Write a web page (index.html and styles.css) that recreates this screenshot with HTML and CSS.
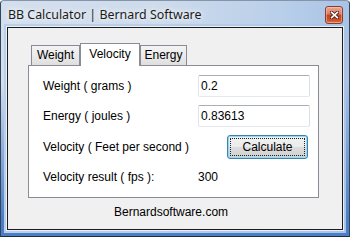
FILE: index.html
```html
<!DOCTYPE html>
<html>
<head>
<meta charset="utf-8">
<title>BB Calculator | Bernard Software</title>
<link rel="stylesheet" href="styles.css">
</head>
<body>
<div class="window">
  <div class="titlebar">
    <span class="title">BB Calculator | Bernard Software</span>
    <span class="close">
      <svg width="9" height="8" viewBox="0 0 9 8">
        <path d="M1.6 1.4 L7.4 6.6 M7.4 1.4 L1.6 6.6" stroke="#4a2319" stroke-width="3.4" stroke-linecap="square" fill="none"/>
        <path d="M1.6 1.4 L7.4 6.6 M7.4 1.4 L1.6 6.6" stroke="#ffffff" stroke-width="1.6" stroke-linecap="square" fill="none"/>
      </svg>
    </span>
  </div>
  <div class="client">
    <div class="tabcontrol">
      <div class="tabstrip">
        <div class="tab tab-weight">Weight</div>
        <div class="tab tab-velocity selected">Velocity</div>
        <div class="tab tab-energy">Energy</div>
      </div>
      <div class="panel">
        <div class="form">
          <div class="lbl">Weight ( grams )</div>
          <div class="textbox">0.2</div>
          <div class="lbl">Energy ( joules )</div>
          <div class="textbox">0.83613</div>
          <div class="lbl">Velocity ( Feet per second )</div>
          <div class="btn"><span class="focus">Calculate</span></div>
          <div class="lbl">Velocity result ( fps ):</div>
          <div class="value">300</div>
        </div>
      </div>
    </div>
    <div class="footer">Bernardsoftware.com</div>
  </div>
</div>
</body>
</html>
```

FILE: styles.css
```css
html, body {
  margin: 0;
  padding: 0;
  background: #ffffff;
}

.window {
  position: relative;
  width: 350px;
  height: 237px;
  box-sizing: border-box;
  display: flex;
  flex-direction: column;
  padding: 0 6px 6px;
  border: 1px solid;
  border-color: #8594a8 #34445c #1f2d44 #34445c;
  border-radius: 4px 4px 0 0;
  background: linear-gradient(to right, #d3dfed 0%, #cedbeb 45%, #b9cfea 80%, #a9c3e5 100%);
}

.window::before {
  content: "";
  position: absolute;
  left: 0;
  right: 0;
  top: 0;
  bottom: 0;
  border: 3px solid #4c7ec5;
  border-top: 0;
  -webkit-mask-image: linear-gradient(to bottom, transparent 0%, transparent 35%, #000 92%);
  mask-image: linear-gradient(to bottom, transparent 0%, transparent 35%, #000 92%);
  pointer-events: none;
}

.titlebar {
  height: 26px;
  margin: 0 -6px;
  padding: 0 6px 0 7px;
  display: flex;
  align-items: flex-start;
}

.title {
  font-family: "Noto Sans", "Open Sans", sans-serif;
  font-size: 12.4px;
  line-height: 25px;
  padding-top: 1px;
  color: #1b1b1b;
  text-shadow: 0 0 5px rgba(255, 255, 255, 0.95), 0 0 9px rgba(255, 255, 255, 0.8);
}

.close {
  margin-left: auto;
  margin-top: 5px;
  width: 18px;
  height: 18px;
  box-sizing: border-box;
  border: 1px solid #84402f;
  border-radius: 3px;
  background: linear-gradient(to bottom, #eaa796 0%, #dc7d62 42%, #c7421f 52%, #d0532d 85%, #df7a55 100%);
  display: flex;
  align-items: center;
  justify-content: center;
  box-shadow: inset 0 0 0 1px rgba(255, 210, 195, 0.45);
}

.close svg {
  display: block;
}

.client {
  flex: 1;
  box-sizing: border-box;
  border: 1px solid #1c1c1c;
  background: #f0f0f0;
  box-shadow: 0 0 0 1px rgba(240, 246, 252, 0.85), 0 0 0 3px rgba(170, 197, 232, 0.6);
  font-family: "Liberation Sans", Arial, sans-serif;
  font-size: 12px;
  color: #000;
  position: relative;
}

.tabcontrol {
  width: 291px;
  margin: 15px 0 0 20px;
}

.tabstrip {
  display: flex;
  align-items: flex-end;
  height: 22px;
  padding-left: 3px;
  position: relative;
  z-index: 1;
}

.tab {
  box-sizing: border-box;
  height: 20px;
  border: 1px solid #898c95;
  border-bottom: 0;
  background: linear-gradient(to bottom, #f3f3f3 0%, #ebebeb 50%, #dedede 100%);
  text-align: center;
  line-height: 14px;
  padding-top: 2px;
  white-space: nowrap;
}

.tab-weight {
  width: 49px;
}

.tab-velocity {
  width: 60px;
}

.tab-energy {
  width: 47px;
}

.tab.selected {
  height: 23px;
  margin-bottom: -1px;
  background: #ffffff;
  padding-top: 3px;
}

.panel {
  box-sizing: border-box;
  height: 133px;
  border: 1px solid #898c95;
  background: #ffffff;
}

.form {
  display: grid;
  grid-template-columns: 155px 112px;
  grid-template-rows: 22px 22px 24px 20px;
  row-gap: 8px;
  padding: 9px 0 0 14px;
}

.lbl {
  align-self: center;
  line-height: 14px;
  white-space: nowrap;
}

.textbox {
  box-sizing: border-box;
  height: 22px;
  border: 1px solid;
  border-color: #abadb3 #dbdfe6 #e3e9ef #e2e3ea;
  border-radius: 2px;
  padding-left: 2px;
  line-height: 20px;
  background: #ffffff;
}

.btn {
  box-sizing: border-box;
  width: 81px;
  height: 24px;
  margin-left: 29px;
  border: 1px solid #3c7fb1;
  border-radius: 3px;
  background: linear-gradient(to bottom, #f2f2f2 0%, #ebebeb 50%, #dddddd 50%, #cfcfcf 100%);
  box-shadow: inset 0 0 0 1px #8fdcf7;
  padding: 2px;
}

.focus {
  display: block;
  height: 100%;
  box-sizing: border-box;
  border: 1px dotted #222;
  text-align: center;
  line-height: 16px;
}

.value {
  align-self: center;
  line-height: 14px;
}

.footer {
  margin-top: 7px;
  padding-left: 106px;
  line-height: 14px;
}
```
